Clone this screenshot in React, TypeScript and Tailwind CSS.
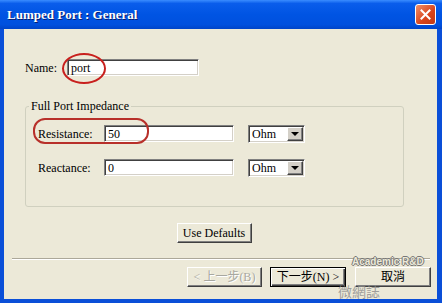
import React from "react";

const sunken =
  "bg-white border-t border-l border-[#808080] border-b border-r border-b-white border-r-white shadow-[inset_1px_1px_0_#404040,inset_-1px_-1px_0_#D4D0C8]";

const SERIF = "'Liberation Serif', 'Times New Roman', Times, serif";
const CJK = "'Liberation Serif', 'Noto Sans CJK TC', serif";

function Field({ value, w = "w-[130px]" }: { value: string; w?: string }) {
  return (
    <div className={`${w} h-[17px] ${sunken} flex items-center pl-[3px] text-[12px] text-black leading-none`}>
      {value}
    </div>
  );
}

function Select() {
  return (
    <div className={`w-[57px] h-[18px] ${sunken} flex items-center text-[12px] leading-none`}>
      <span className="flex-1 pl-[3px]">Ohm</span>
      <div className="w-[16px] h-[14px] mr-[1px] bg-[#D4D0C8] border border-t-white border-l-white border-b-[#404040] border-r-[#404040] shadow-[inset_-1px_-1px_0_#808080] flex items-center justify-center">
        <div className="w-0 h-0 border-l-[4px] border-r-[4px] border-t-[4px] border-l-transparent border-r-transparent border-t-black" />
      </div>
    </div>
  );
}

function Btn({ children, w, variant }: { children: React.ReactNode; w: string; variant?: "default" | "disabled" }) {
  const base = `${w} h-[20px] bg-[#ECE9D8] flex items-center justify-center text-[12px] leading-none`;
  if (variant === "default") {
    return (
      <div className={`${base} border border-black shadow-[inset_1px_1px_0_#fff,inset_-1px_-1px_0_#404040,inset_-2px_-2px_0_#808080] text-black`}>
        {children}
      </div>
    );
  }
  if (variant === "disabled") {
    return (
      <div className={`${base} border border-t-white border-l-white border-b-[#404040] border-r-[#404040] shadow-[inset_-1px_-1px_0_#808080] text-[#A8A8A0] [text-shadow:1px_1px_0_#fff]`}>
        {children}
      </div>
    );
  }
  return (
    <div className={`${base} border border-t-white border-l-white border-b-[#404040] border-r-[#404040] shadow-[inset_-1px_-1px_0_#808080] text-black`}>
      {children}
    </div>
  );
}

export default function App() {
  return (
    <div className="w-[442px] h-[303px] flex flex-col bg-[#0A4FD8] overflow-hidden" style={{ fontFamily: SERIF }}>
      {/* Title bar */}
      <div className="h-[29px] flex items-center pl-[7px] pr-[6px] bg-[linear-gradient(to_bottom,#3A8CFF_0%,#0A5DEB_12%,#0054E3_50%,#0050DE_85%,#0044C8_100%)]">
        <span className="flex-1 text-white font-bold text-[13px] [text-shadow:1px_1px_0_#0A1E6E]">
          Lumped Port : General
        </span>
        <div className="w-[21px] h-[21px] rounded-[3px] border border-white bg-[linear-gradient(135deg,#F0906A,#D8431B_60%,#C23A14)] flex items-center justify-center">
          <svg width="11" height="11" viewBox="0 0 11 11">
            <path d="M1.5 1.5 L9.5 9.5 M9.5 1.5 L1.5 9.5" stroke="white" strokeWidth="2" strokeLinecap="square" />
          </svg>
        </div>
      </div>

      {/* Body */}
      <div className="flex-1 flex border-l-[4px] border-r-[5px] border-b-[4px] border-[#0A4FD8]">
        <div className="relative flex-1 bg-[#ECE9D8] flex flex-col text-[12px] leading-[14px] text-black">
          {/* Name row */}
          <div className="flex items-center mt-[30px] pl-[21px] h-[17px]">
            <span className="w-[42px]">Name:</span>
            <Field value="port" w="w-[132px]" />
          </div>

          {/* Group box */}
          <fieldset className="ml-[21px] w-[379px] mt-[23px] h-[108px] border border-[#D0D0BF] rounded-[3px] p-0 pl-[12px]">
            <legend className="ml-[-9px] px-[2px] text-[12px] leading-[14px]">Full Port Impedance</legend>
            <div className="flex items-center mt-[12px] h-[17px]">
              <span className="w-[66px]">Resistance:</span>
              <Field value="50" />
              <div className="w-[14px]" />
              <Select />
            </div>
            <div className="flex items-center mt-[17px] h-[17px]">
              <span className="w-[66px]">Reactance:</span>
              <Field value="0" />
              <div className="w-[14px]" />
              <Select />
            </div>
          </fieldset>

          {/* Use defaults */}
          <div className="flex justify-center mt-[16px] pr-[13px]">
            <Btn w="w-[75px]">Use Defaults</Btn>
          </div>

          {/* separator */}
          <div className="mt-[15px] ml-[8px] mr-[7px] h-[2px] border-t border-[#ACA899] border-b border-b-white" />

          {/* bottom buttons */}
          <div className="flex justify-end mt-[7px] pr-[6px]" style={{ fontFamily: CJK }}>
            <Btn w="w-[75px]" variant="disabled">&lt; 上一步(B)</Btn>
            <div className="w-[8px]" />
            <Btn w="w-[76px]" variant="default">下一步(N) &gt;</Btn>
            <div className="w-[9px]" />
            <Btn w="w-[76px]">取消</Btn>
          </div>

          {/* Annotations */}
          <div className="absolute left-[58px] top-[24px] w-[44px] h-[31px] border-2 border-[#C8201E] rounded-[50%]" />
          <div className="absolute left-[29px] top-[89px] w-[116px] h-[26px] border-2 border-[#B8302A] rounded-[12px]" />

          {/* Watermark */}
          <div className="absolute left-[348px] top-[228px] text-[10px] font-bold leading-none text-[#ECE9D8] [text-shadow:1px_0_0_#777,-1px_0_0_#777,0_1px_0_#777,0_-1px_0_#777]" style={{ fontFamily: "'Liberation Sans', Arial, sans-serif" }}>
            Academic R&amp;D
          </div>
          <div className="absolute left-[334px] top-[255px] text-[14px] leading-none text-[#8A8A8A]/80" style={{ fontFamily: "'Noto Sans CJK TC', sans-serif" }}>
            微網誌
          </div>
        </div>
      </div>
    </div>
  );
}
